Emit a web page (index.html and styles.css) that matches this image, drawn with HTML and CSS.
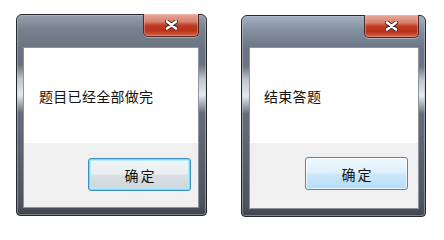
FILE: index.html
```html
<!DOCTYPE html>
<html lang="zh-CN">
<head>
<meta charset="utf-8">
<title>对话框</title>
<link rel="stylesheet" href="styles.css">
</head>
<body>
<div class="screen">
  <div class="dialog dialog-a">
    <div class="titlebar">
      <div class="close">
        <svg width="13" height="10" viewBox="0 0 13 10"><path d="M2 1.5 L11 8.5 M11 1.5 L2 8.5" stroke="#3a2220" stroke-width="4.2" stroke-linecap="round"/><path d="M2 1.5 L11 8.5 M11 1.5 L2 8.5" stroke="#ffffff" stroke-width="2.6" stroke-linecap="round"/></svg>
      </div>
    </div>
    <div class="client">
      <div class="message">题目已经全部做完</div>
      <div class="footer">
        <div class="btn btn-focus">确定</div>
      </div>
    </div>
  </div>
  <div class="dialog dialog-b">
    <div class="titlebar">
      <div class="close">
        <svg width="13" height="10" viewBox="0 0 13 10"><path d="M2 1.5 L11 8.5 M11 1.5 L2 8.5" stroke="#3a2220" stroke-width="4.2" stroke-linecap="round"/><path d="M2 1.5 L11 8.5 M11 1.5 L2 8.5" stroke="#ffffff" stroke-width="2.6" stroke-linecap="round"/></svg>
      </div>
    </div>
    <div class="client">
      <div class="message">结束答题</div>
      <div class="footer">
        <div class="btn btn-hover">确定</div>
      </div>
    </div>
  </div>
</div>
</body>
</html>
```

FILE: styles.css
```css
html, body {
  margin: 0;
  padding: 0;
  background: #ffffff;
}

.screen {
  display: flex;
  align-items: flex-start;
  gap: 34px;
  padding: 14px 0 0 16px;
  font-family: "Noto Sans CJK SC", "Noto Sans", sans-serif;
}

.dialog {
  display: flex;
  flex-direction: column;
  box-sizing: border-box;
  height: 202px;
  border: 1px solid #23282f;
  border-radius: 6px 6px 4px 4px;
  background:
    linear-gradient(to bottom, rgba(255,255,255,0) 50px, rgba(230,234,238,0.7) 64px, rgba(245,247,249,0.9) 80px, rgba(255,255,255,0) 98px),
    linear-gradient(to bottom, #959ea9 0, #78818e 14px, #6a7380 34px, #626a77 110px, #4d545f 190px, #3b4048 202px);
  box-shadow: inset 0 0 0 1px rgba(200,206,214,0.45);
}

.dialog-a {
  width: 191px;
  padding: 0 8px 8px 7px;
}

.dialog-b {
  width: 185px;
  margin-top: 1px;
  padding: 0 7px 8px 8px;
  background:
    linear-gradient(to bottom, rgba(255,255,255,0) 50px, rgba(230,234,238,0.7) 64px, rgba(245,247,249,0.9) 80px, rgba(255,255,255,0) 98px),
    linear-gradient(to bottom, #a3b1c2 0, #8390a0 14px, #6c7584 32px, #626a77 110px, #4d545f 190px, #3b4048 202px);
}

.titlebar {
  display: flex;
  justify-content: flex-end;
  align-items: flex-start;
  height: 33px;
  margin-right: -1px;
}

.dialog-b .titlebar {
  height: 32px;
}

.close {
  display: flex;
  align-items: center;
  justify-content: center;
  width: 56px;
  height: 23px;
  box-sizing: border-box;
  margin-top: -1px;
  border: 1px solid #4b2a26;
  border-top: none;
  border-radius: 0 0 5px 5px;
  background: linear-gradient(to bottom, #e9aa9c 0, #d7806c 35%, #c13a22 52%, #b8321c 75%, #d86246 100%);
  box-shadow: inset 0 0 0 1px rgba(255,200,190,0.35), 0 1px 0 rgba(220,225,232,0.5);
}

.dialog-b .close {
  width: 55px;
}

.client {
  flex: 1;
  display: flex;
  flex-direction: column;
  border: 1px solid #8b939e;
  margin: -1px;
  background: #ffffff;
}

.message {
  height: 95px;
  display: flex;
  align-items: center;
  padding-left: 15px;
  font-size: 14px;
  letter-spacing: 0.3px;
  color: #111111;
  background: #ffffff;
}

.dialog-b .message {
  padding-left: 14px;
}

.footer {
  flex: 1;
  display: flex;
  justify-content: flex-end;
  align-items: flex-start;
  padding: 15px 7px 0 0;
  background: #f0f0f0;
}

.dialog-b .footer {
  padding: 14px 10px 0 0;
}

.btn {
  display: flex;
  align-items: center;
  justify-content: center;
  box-sizing: border-box;
  width: 103px;
  height: 33px;
  border-radius: 3px;
  font-size: 14px;
  letter-spacing: 2px;
  padding-left: 2px;
  color: #111111;
}

.btn-focus {
  border: 1px solid #3c8fbf;
  background: linear-gradient(to bottom, #f4f6f7 0, #eaeef0 48%, #d9e0e4 52%, #cdd6db 100%);
  box-shadow: inset 0 0 0 1px #7fd6f4, inset 0 0 0 2px #b7ecfb;
}

.btn-hover {
  border: 1px solid #4d87b3;
  background: linear-gradient(to bottom, #eef7fd 0, #e0f0fb 48%, #cbe8fa 52%, #b5ddf6 100%);
  box-shadow: inset 0 0 0 1px rgba(255,255,255,0.7);
}
```
